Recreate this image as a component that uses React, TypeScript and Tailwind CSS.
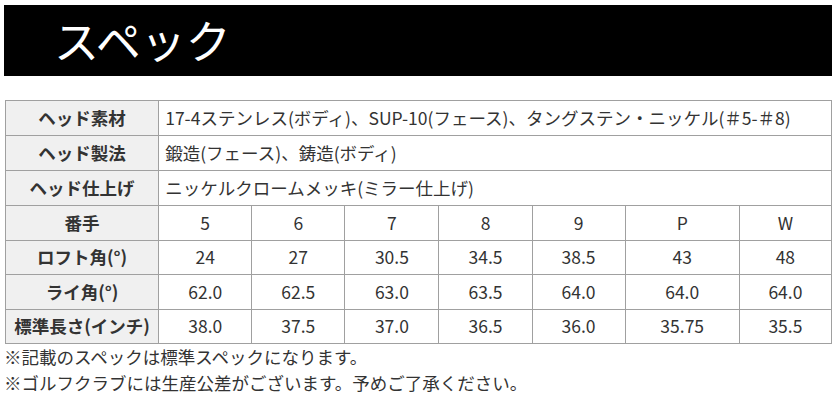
import React from 'react';

const font = { fontFamily: '"Noto Sans CJK JP", "Noto Sans", sans-serif' };

const numRows: [string, string[]][] = [
  ['番手', ['5', '6', '7', '8', '9', 'P', 'W']],
  ['ロフト角(°)', ['24', '27', '30.5', '34.5', '38.5', '43', '48']],
  ['ライ角(°)', ['62.0', '62.5', '63.0', '63.5', '64.0', '64.0', '64.0']],
  ['標準長さ(インチ)', ['38.0', '37.5', '37.0', '36.5', '36.0', '35.75', '35.5']],
];

const textRows: [string, string][] = [
  ['ヘッド素材', '17-4ステンレス(ボディ)、SUP-10(フェース)、タングステン・ニッケル(＃5-＃8)'],
  ['ヘッド製法', '鍛造(フェース)、鋳造(ボディ)'],
  ['ヘッド仕上げ', 'ニッケルクロームメッキ(ミラー仕上げ)'],
];

const th = 'border border-[#a0a0a0] bg-[#f0f0f0] text-center font-bold text-[#333] p-0';
const td = 'border border-[#a0a0a0] text-[#333] p-0';

export default function App() {
  return (
    <div className="w-[837px] h-[403px] bg-white pt-[5px]" style={font}>
      <div className="ml-[4px] w-[828px] h-[71px] bg-black flex items-center pl-[50px] pb-[3px]">
        <h1 className="text-white text-[45px] leading-none font-normal">スペック</h1>
      </div>

      <table className="mt-[24px] ml-[5px] w-[827px] border-collapse table-fixed text-[17.5px]">
        <colgroup>
          <col className="w-[153px]" />
          <col className="w-[93px]" />
          <col className="w-[93px]" />
          <col className="w-[94px]" />
          <col className="w-[93px]" />
          <col className="w-[93px]" />
          <col className="w-[114px]" />
          <col className="w-[92px]" />
        </colgroup>
        <tbody>
          {textRows.map(([label, value]) => (
            <tr key={label} className="h-[35px]">
              <th className={th}>{label}</th>
              <td className={`${td} pl-[6px] text-left whitespace-nowrap`} colSpan={7}>{value}</td>
            </tr>
          ))}
          {numRows.map(([label, values]) => (
            <tr key={label} className="h-[34.5px]">
              <th className={th}>{label}</th>
              {values.map((v, i) => (
                <td key={i} className={`${td} text-center`}>{v}</td>
              ))}
            </tr>
          ))}
        </tbody>
      </table>

      <div className="ml-[4px] text-[17.5px] leading-[26px] text-[#333]">
        <p>※記載のスペックは標準スペックになります。</p>
        <p>※ゴルフクラブには生産公差がございます。予めご了承ください。</p>
      </div>
    </div>
  );
}
